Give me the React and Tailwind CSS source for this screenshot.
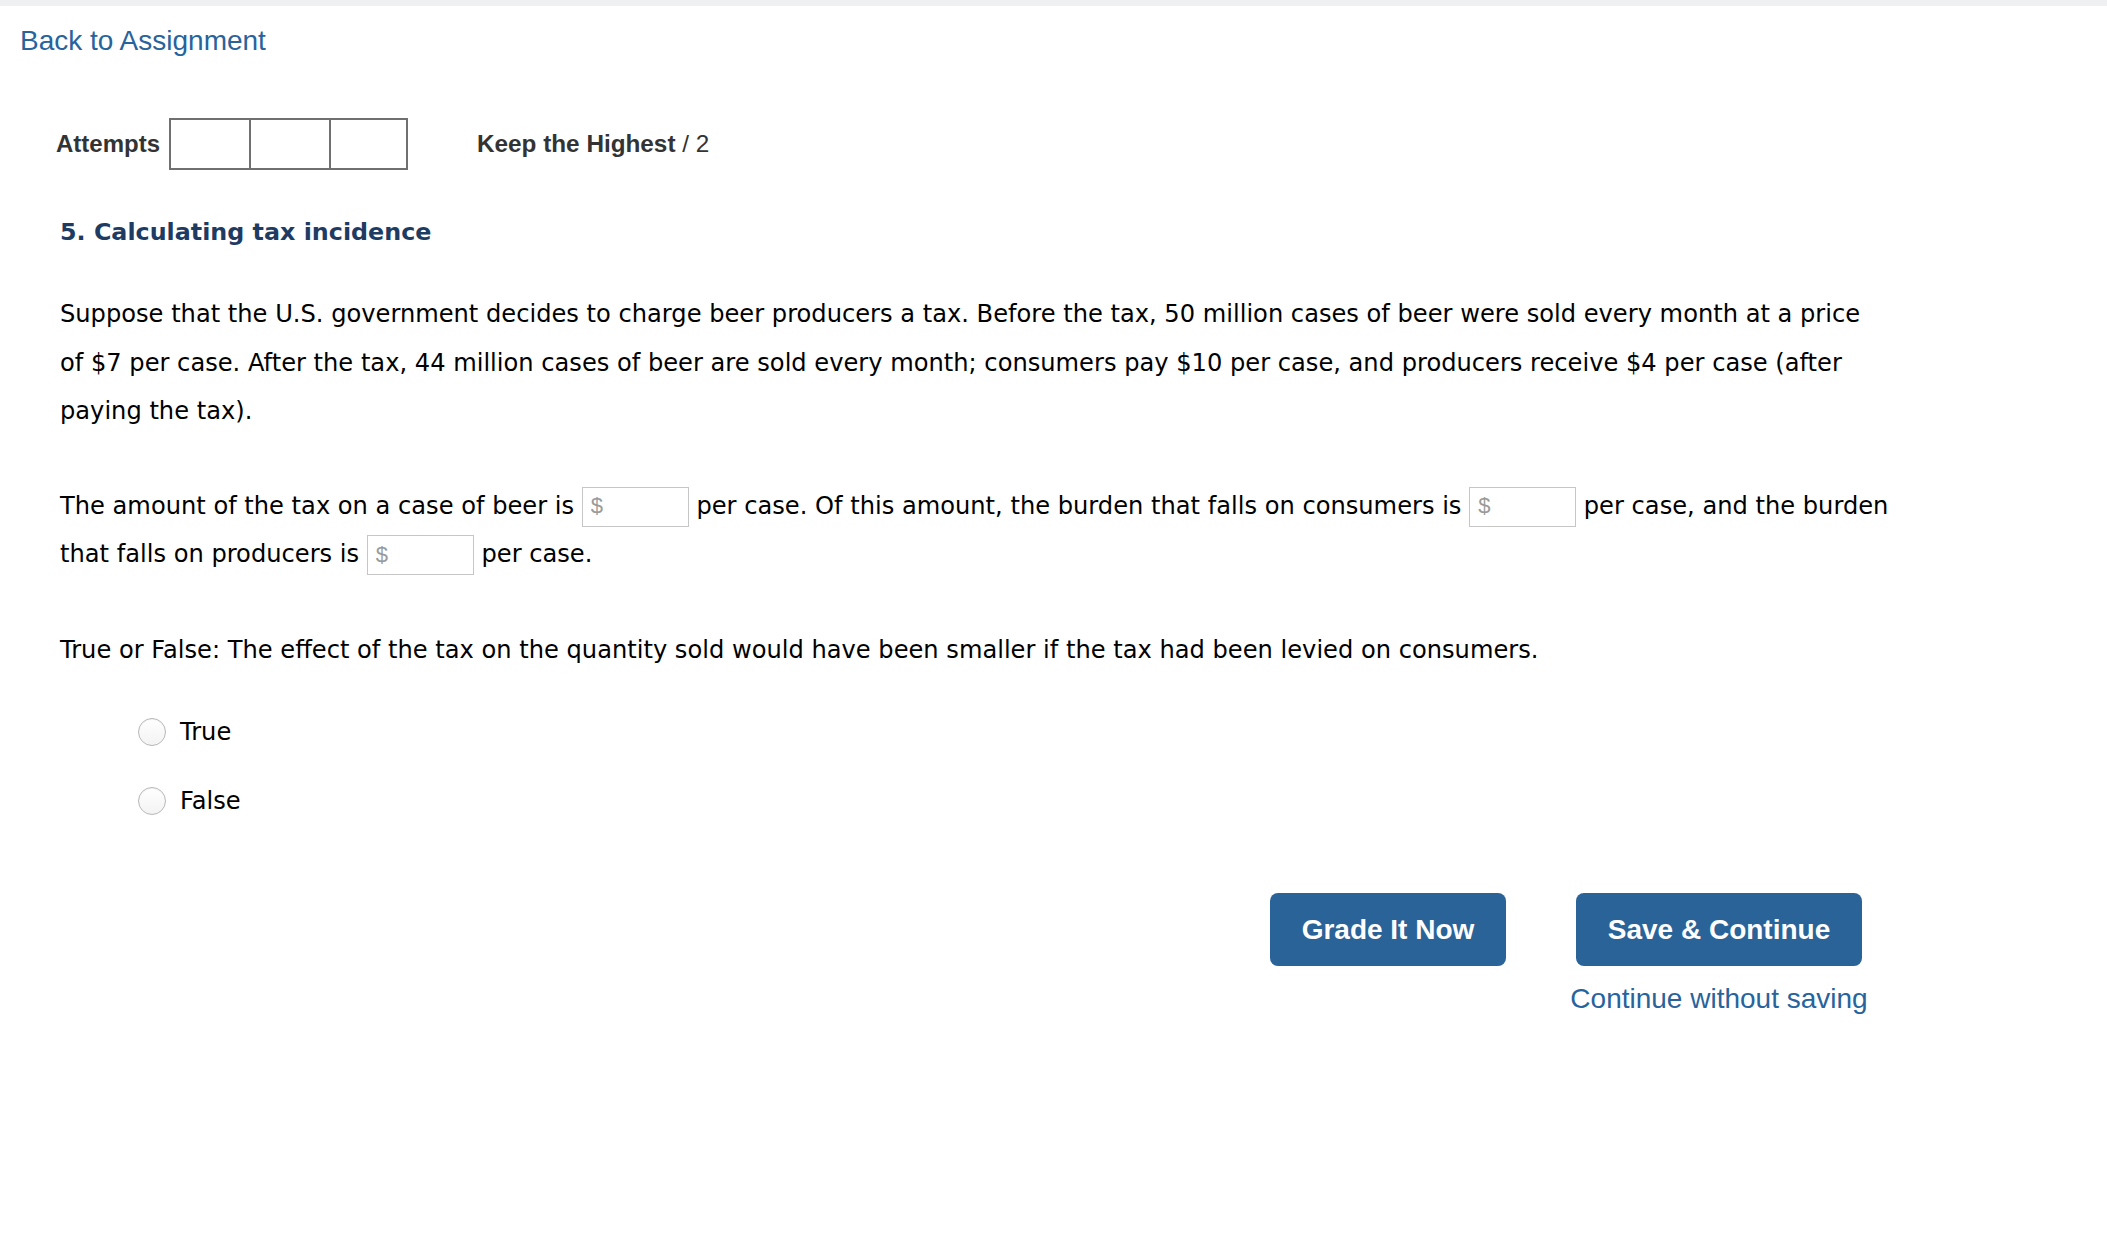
import React from 'react'

const body = { fontFamily: '"DejaVu Sans", Verdana, sans-serif' }

function DollarInput () {
  return (
    <input
      type="text"
      placeholder="$"
      className="inline-block align-middle w-[107px] h-[40px] border border-[#c6c6c6] px-[8px] text-[22px] text-black placeholder:text-[#9a9a9a] bg-white outline-none"
      style={{ fontFamily: '"Liberation Sans", Arial, sans-serif' }}
    />
  )
}

function Radio ({ label }) {
  return (
    <label className="flex items-center h-[48px] gap-[14px] cursor-pointer">
      <span className="w-[28px] h-[28px] rounded-full border border-[#b8b8b8] bg-gradient-to-b from-white to-[#f3f3f3] shadow-[inset_0_1px_1px_rgba(0,0,0,0.05)]" />
      <span className="text-[24.15px] text-black">{label}</span>
    </label>
  )
}

export default function App () {
  return (
    <div className="min-h-screen bg-white" style={{ fontFamily: '"Liberation Sans", Arial, sans-serif' }}>
      <div className="h-[6px] bg-[#eef0f1]" />

      {/* back link */}
      <div className="pl-[20px] mt-[19px]">
        <a href="#" className="text-[28px] leading-[32px] text-[#28639b]">Back to Assignment</a>
      </div>

      {/* attempts */}
      <div className="flex items-center pl-[56px] mt-[61px] h-[52px]">
        <span className="text-[24px] font-bold text-[#333]">Attempts</span>
        <div className="ml-[9px] flex h-[52px] border-2 border-[#707070]">
          <div className="w-[78px]" />
          <div className="w-[80px] border-l-2 border-[#707070]" />
          <div className="w-[77px] border-l-2 border-[#707070]" />
        </div>
        <span className="ml-[69px] text-[24.3px] text-[#333]">
          <span className="font-bold">Keep the Highest</span> / 2
        </span>
      </div>

      <div className="pl-[60px]" style={body}>
        <h2 className="mt-[46px] text-[23.8px] leading-[32px] font-bold text-[#1d3b63]">
          5. Calculating tax incidence
        </h2>

        <div className="w-[1836px] text-[24.15px] leading-[48.5px] text-black">
          <p className="mt-[42px]">
            Suppose that the U.S. government decides to charge beer producers a tax. Before the tax, 50 million cases of beer were sold every month at a price<br />
            of $7 per case. After the tax, 44 million cases of beer are sold every month; consumers pay $10 per case, and producers receive $4 per case (after paying the tax).
          </p>

          <p className="mt-[46px]">
            The amount of the tax on a case of beer is <DollarInput /> per case. Of this amount, the burden that falls on consumers is <DollarInput /> per case, and the burden that falls on producers is <DollarInput /> per case.
          </p>

          <p className="mt-[47px]">
            True or False: The effect of the tax on the quantity sold would have been smaller if the tax had been levied on consumers.
          </p>
        </div>

        <div className="mt-[34px] pl-[78px] flex flex-col gap-[21px]">
          <Radio label="True" />
          <Radio label="False" />
        </div>
      </div>

      {/* actions */}
      <div className="pl-[60px] mt-[68px] w-[1867px] flex justify-end gap-[65px]">
        <button className="w-[236px] h-[73px] rounded-[8px] bg-[#2a6398] text-white text-[28px] font-bold">
          Grade It Now
        </button>
        <div className="w-[296px] flex flex-col items-center">
          <button className="w-[286px] h-[73px] rounded-[8px] bg-[#2a6398] text-white text-[28px] font-bold">
            Save &amp; Continue
          </button>
          <a href="#" className="mt-[17px] text-[28px] leading-[32px] text-[#28639b] whitespace-nowrap">
            Continue without saving
          </a>
        </div>
      </div>
    </div>
  )
}
